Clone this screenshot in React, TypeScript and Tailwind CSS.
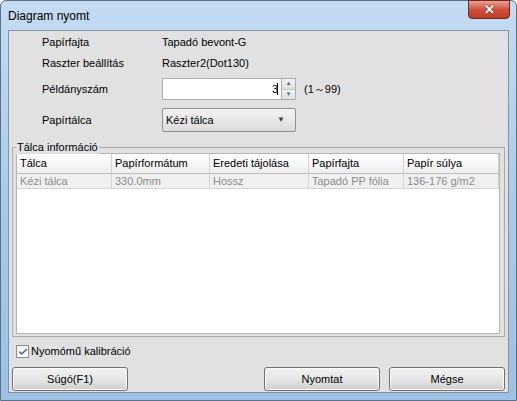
import { Check } from 'lucide-react';

const font = { fontFamily: '"Liberation Sans", Arial, sans-serif' };

function Row({ label, className = '', children }: { label: string; className?: string; children: React.ReactNode }) {
  return (
    <div className={`flex items-center ${className}`}>
      <div className="w-[153px] pl-[33px] text-[11px] text-black">{label}</div>
      <div className="flex items-center">{children}</div>
    </div>
  );
}

function Btn({ label, className = '' }: { label: string; className?: string }) {
  return (
    <div
      className={`flex h-[24px] w-[116px] items-center justify-center rounded-[3px] border border-[#707070] bg-gradient-to-b from-[#f2f2f2] via-[#e6e6e6] to-[#cfcfcf] text-[11px] text-black shadow-[inset_0_0_0_1px_#fbfbfb] ${className}`}
    >
      {label}
    </div>
  );
}

export default function App() {
  const cols = [
    { h: 'Tálca', v: 'Kézi tálca', w: 'w-[95px]' },
    { h: 'Papírformátum', v: '330.0mm', w: 'w-[98px]' },
    { h: 'Eredeti tájolása', v: 'Hossz', w: 'w-[99px]' },
    { h: 'Papírfajta', v: 'Tapadó PP fólia', w: 'w-[95px]' },
    { h: 'Papír súlya', v: '136-176  g/m2', w: 'flex-1' },
  ];

  return (
    <div className="h-[401px] w-[517px] overflow-hidden" style={font}>
      <div className="flex h-full flex-col rounded-t-[6px] border border-[#5a7088] bg-gradient-to-b from-[#c4dcf2] via-[#a9cbe9] to-[#9cc1e3] px-[7px] pb-[7px]">
        <div className="relative flex h-[29px] shrink-0 items-center">
          <span className="pt-[1px] text-[12px] text-black">Diagram nyomt</span>
          <div className="absolute right-[-1px] top-[-1px] flex h-[19px] w-[42px] items-center justify-center rounded-b-[4px] border border-[#6d2a22] bg-gradient-to-b from-[#e8a394] via-[#d0513d] to-[#c2391f]">
            <span className="text-[13px] font-bold leading-none text-white [text-shadow:0_0_2px_#5a1a10]">✕</span>
          </div>
        </div>

        <div className="flex min-h-0 flex-1 flex-col overflow-hidden border border-[#84929f] bg-[#e1e1e1] text-[11px]">
          <Row label="Papírfajta" className="mt-[4px] h-[14px]">
            <span>Tapadó bevont-G</span>
          </Row>
          <Row label="Raszter beállítás" className="mt-[7px] h-[14px]">
            <span>Raszter2(Dot130)</span>
          </Row>
          <Row label="Példányszám" className="mt-[8px] h-[22px]">
            <div className="flex h-[22px] w-[120px] items-center justify-end border border-[#abadb3] bg-white pr-[3px]">
              <span className="leading-none">3</span>
              <span className="ml-[-1px] h-[12px] w-px bg-black" />
            </div>
            <div className="flex h-[22px] w-[14px] flex-col border-y border-r border-[#abadb3] bg-white">
              <div className="flex flex-1 items-center justify-center border-b border-[#c8c8c8] bg-gradient-to-b from-[#f4f4f4] to-[#dedede] text-[6px] text-[#3d6ea8]">▲</div>
              <div className="flex flex-1 items-center justify-center bg-gradient-to-b from-[#f4f4f4] to-[#dedede] text-[6px] text-[#3d6ea8]">▼</div>
            </div>
            <span className="ml-[8px]">(1～99)</span>
          </Row>
          <Row label="Papírtálca" className="mt-[8px] h-[24px]">
            <div className="flex h-[24px] w-[134px] items-center justify-between rounded-[2px] border border-[#8e8f8f] bg-gradient-to-b from-[#f3f3f3] to-[#dcdcdc] pl-[3px] pr-[10px]">
              <span>Kézi tálca</span>
              <span className="text-[8px] text-[#444]">▼</span>
            </div>
          </Row>

          <div className="relative mx-[3px] mt-[15px] flex h-[190px] shrink-0 flex-col border border-[#aaaaaa] pb-[2px] pl-[3px] pr-[4px] pt-[5px]">
            <span className="absolute left-[3px] top-[-8px] bg-[#e1e1e1] px-[1px] leading-[14px]">Tálca információ</span>
            <div className="flex flex-1 flex-col border border-[#b5b5b5] bg-white">
              <div className="flex h-[20px] border-b border-[#bcbcbc] bg-gradient-to-b from-[#ffffff] to-[#eeeeee]">
                {cols.map((c) => (
                  <div key={c.h} className={`${c.w} flex items-center border-r border-[#d2d2d2] pl-[3px] text-black`}>
                    {c.h}
                  </div>
                ))}
              </div>
              <div className="flex h-[15px] border-b border-[#d4d4d4] bg-[#f0f0f0]">
                {cols.map((c) => (
                  <div key={c.h} className={`${c.w} flex items-center border-r border-[#d4d4d4] pl-[3px] text-[#8c8c8c]`}>
                    {c.v}
                  </div>
                ))}
              </div>
            </div>
          </div>

          <div className="ml-[7px] mt-[8px] flex h-[13px] items-center gap-[2px]">
            <div className="flex h-[13px] w-[13px] items-center justify-center border border-[#8e8f8f] bg-gradient-to-b from-[#f0f0f0] to-white">
              <Check className="h-[10px] w-[10px] text-[#3c5fa0]" strokeWidth={3.5} />
            </div>
            <span>Nyomómű kalibráció</span>
          </div>

          <div className="mt-[9px] flex px-[3px]">
            <Btn label="Súgó(F1)" />
            <div className="flex-1" />
            <Btn label="Nyomtat" />
            <Btn label="Mégse" className="ml-[9px]" />
          </div>
        </div>
      </div>
    </div>
  );
}
